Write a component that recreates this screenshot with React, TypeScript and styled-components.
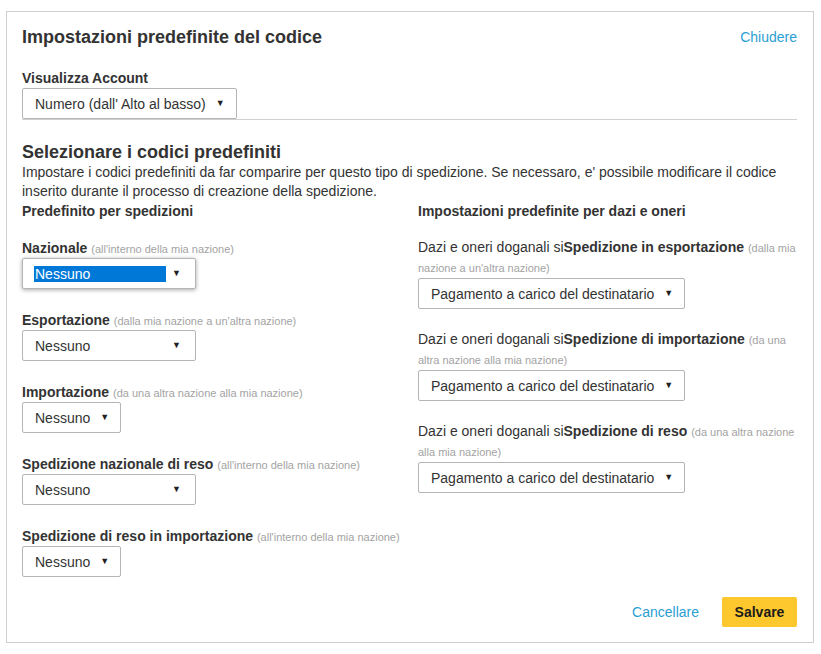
import React from "react";
import styled, { createGlobalStyle } from "styled-components";

const Global = createGlobalStyle`
  html, body { margin: 0; padding: 0; background: #fff; }
  body { font-family: "Liberation Sans", Arial, sans-serif; color: #333; }
`;

const Page = styled.div`
  padding: 11px 0 0 6px;
`;

const Panel = styled.div`
  width: 808px;
  min-height: 632px;
  box-sizing: border-box;
  border: 1px solid #cfcfcf;
  padding: 15px 16px 15px 15px;
  display: flex;
  flex-direction: column;
  & > * { flex-shrink: 0; }
`;

const HeaderRow = styled.div`
  display: flex;
  justify-content: space-between;
  align-items: center;
`;

const Title = styled.h1`
  margin: 0;
  font-size: 18px;
  line-height: 20px;
  font-weight: bold;
  color: #333;
`;

const LinkText = styled.a`
  font-size: 14px;
  color: #2b9ed3;
  text-decoration: none;
  cursor: pointer;
`;

const FieldLabel = styled.div<{ $top?: number }>`
  font-size: 14px;
  font-weight: bold;
  line-height: 22px;
  height: 20px;
  margin-top: ${(p) => p.$top ?? 0}px;
  color: #333;
`;

const Hint = styled.span`
  font-size: 11px;
  line-height: 1;
  font-weight: normal;
  color: #a3a3a3;
`;

const SelectBox = styled.div<{ $w: number; $focused?: boolean }>`
  width: ${(p) => p.$w}px;
  height: 31px;
  flex-shrink: 0;
  box-sizing: border-box;
  margin-top: 1px;
  border: 1px solid #b5b5b5;
  border-radius: 2px;
  background: #fff;
  display: flex;
  align-items: center;
  padding: 0 14px 0 11px;
  font-size: 14px;
  color: #333;
  box-shadow: ${(p) => (p.$focused ? "0 1px 4px rgba(0,0,0,0.35)" : "none")};
  position: relative;
  z-index: 1;
`;

const SelectValue = styled.span<{ $highlight?: boolean }>`
  flex: 1;
  white-space: nowrap;
  line-height: 16px;
  padding-left: 1px;
  margin-right: ${(p) => (p.$highlight ? -4 : 0)}px;
  background: ${(p) => (p.$highlight ? "#0078d7" : "transparent")};
  color: ${(p) => (p.$highlight ? "#fff" : "#333")};
`;

const Arrow = styled.span`
  font-size: 9px;
  color: #222;
  margin-left: 10px;
  line-height: 1;
`;

const Divider = styled.div`
  height: 1px;
  background: #d0d0d0;
`;

const SectionTitle = styled.h2`
  margin: 21px 0 0;
  font-size: 18px;
  line-height: 22px;
  font-weight: bold;
  color: #333;
`;

const Paragraph = styled.p`
  margin: 0;
  font-size: 14px;
  line-height: 19px;
  color: #333;
`;

const Columns = styled.div`
  display: grid;
  grid-template-columns: 396px 1fr;
`;

const Column = styled.div`
  display: flex;
  flex-direction: column;
`;

const ColumnHeading = styled.div`
  font-size: 14px;
  font-weight: bold;
  line-height: 20px;
  color: #333;
  margin-bottom: 16px;
`;

const Group = styled.div`
  display: flex;
  flex-direction: column;
  margin-bottom: 20px;
`;

const DutyGroup = styled.div`
  display: flex;
  flex-direction: column;
  margin-bottom: 20px;
  &:first-of-type { margin-top: 1px; }
`;

const DutyText = styled.div`
  font-size: 14px;
  line-height: 20px;
  color: #333;
  b { font-weight: bold; }
`;

const Footer = styled.div`
  display: flex;
  justify-content: flex-end;
  align-items: center;
  gap: 23px;
  margin-top: auto;
`;

const SaveButton = styled.button`
  width: 75px;
  height: 30px;
  border: none;
  border-radius: 2px;
  background: #fdc72e;
  font-family: "Liberation Sans", Arial, sans-serif;
  font-size: 14px;
  font-weight: bold;
  color: #1b1b1b;
  cursor: pointer;
`;

type SelProps = { value: string; width: number; focused?: boolean };
const Select = ({ value, width, focused }: SelProps) => (
  <SelectBox $w={width} $focused={focused}>
    <SelectValue $highlight={focused}>{value}</SelectValue>
    <Arrow>▼</Arrow>
  </SelectBox>
);

const leftFields = [
  { label: "Nazionale", hint: "(all'interno della mia nazione)", w: 174, focused: true },
  { label: "Esportazione", hint: "(dalla mia nazione a un'altra nazione)", w: 174 },
  { label: "Importazione", hint: "(da una altra nazione alla mia nazione)", w: 99 },
  { label: "Spedizione nazionale di reso", hint: "(all'interno della mia nazione)", w: 174 },
  { label: "Spedizione di reso in importazione", hint: "(all'interno della mia nazione)", w: 99 },
];

const dutyFields = [
  { bold: "Spedizione in esportazione", hint: "(dalla mia nazione a un'altra nazione)" },
  { bold: "Spedizione di importazione", hint: "(da una altra nazione alla mia nazione)" },
  { bold: "Spedizione di reso", hint: "(da una altra nazione alla mia nazione)" },
];

export default function App() {
  return (
    <>
      <Global />
      <Page>
        <Panel>
          <HeaderRow>
            <Title>Impostazioni predefinite del codice</Title>
            <LinkText>Chiudere</LinkText>
          </HeaderRow>
          <FieldLabel $top={20}>Visualizza Account</FieldLabel>
          <Select value="Numero (dall' Alto al basso)" width={215} />
          <Divider />
          <SectionTitle>Selezionare i codici predefiniti</SectionTitle>
          <Paragraph>
            Impostare i codici predefiniti da far comparire per questo tipo di spedizione. Se necessaro, e'
            possibile modificare il codice inserito durante il processo di creazione della spedizione.
          </Paragraph>
          <Columns>
            <Column>
              <ColumnHeading>Predefinito per spedizioni</ColumnHeading>
              {leftFields.map((f) => (
                <Group key={f.label}>
                  <FieldLabel>
                    {f.label} <Hint>{f.hint}</Hint>
                  </FieldLabel>
                  <Select value="Nessuno" width={f.w} focused={f.focused} />
                </Group>
              ))}
            </Column>
            <Column>
              <ColumnHeading>Impostazioni predefinite per dazi e oneri</ColumnHeading>
              {dutyFields.map((f) => (
                <DutyGroup key={f.bold}>
                  <DutyText>
                    Dazi e oneri doganali si<b>{f.bold}</b> <Hint>{f.hint}</Hint>
                  </DutyText>
                  <Select value="Pagamento a carico del destinatario" width={267} />
                </DutyGroup>
              ))}
            </Column>
          </Columns>
          <Footer>
            <LinkText>Cancellare</LinkText>
            <SaveButton>Salvare</SaveButton>
          </Footer>
        </Panel>
      </Page>
    </>
  );
}
